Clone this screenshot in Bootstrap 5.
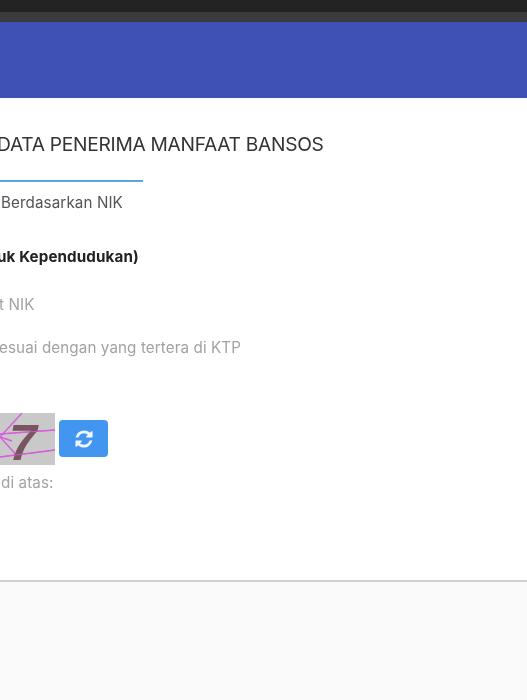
<!DOCTYPE html>
<html lang="id">
<head>
<meta charset="utf-8">
<title>Data Penerima Manfaat Bansos</title>
<link href="https://cdn.jsdelivr.net/npm/bootstrap@5.3.0/dist/css/bootstrap.min.css" rel="stylesheet">
<style>
html,body{height:100%;}
body{background:#fafafa;font-family:"Inter","Liberation Sans",sans-serif;overflow:hidden;}
.shot-wrap{filter:blur(.7px);height:700px;overflow:hidden;}
.top-dark{height:12px;background:#232323;}
.top-gray{height:10px;background:#3b3a3c;}
.head-blue{height:76px;background:#3f51b5;}
.sheet{height:484px;background:#fff;border-bottom:2px solid #cfcfcf;overflow:hidden;padding-top:35px;}
.ttl{font-size:19.2px;line-height:22px;color:#333;margin:0 0 0 -3px;font-weight:400;letter-spacing:-.28px;white-space:nowrap;}
.rule{width:143px;height:2px;background:#5aa5e0;margin-top:25px;}
.ln{font-size:15.2px;line-height:18px;white-space:nowrap;margin:0;letter-spacing:.1px;}
.l1{color:#555;margin:12px 0 0 1px;}
.l2{color:#222;font-weight:700;margin:36px 0 0 -3px;}
.l3{color:#a2a2a2;margin:30px 0 0 -1px;}
.l4{color:#a2a2a2;margin:25px 0 0 -1px;}
.cap-row{margin-top:56px;height:52px;}
.cap-img{width:55px;height:52px;background:#c9c9c9;display:block;}
.cap-btn{width:49px;height:37px;background:#4296f0;border:0;border-radius:4px;padding:0;margin:7px 0 0 4px;}
.cap-btn svg{width:20px;height:20px;fill:#eef5fd;}
.l5{color:#a2a2a2;margin:9px 0 0 1px;}
</style>
</head>
<body>
<div class="shot-wrap">
  <div class="top-dark"></div>
  <div class="top-gray"></div>
  <div class="head-blue"></div>
  <main class="sheet">
    <h1 class="ttl">DATA PENERIMA MANFAAT BANSOS</h1>
    <div class="rule"></div>
    <p class="ln l1">Berdasarkan NIK</p>
    <p class="ln l2">uk Kependudukan)</p>
    <p class="ln l3">t NIK</p>
    <p class="ln l4">esuai dengan yang tertera di KTP</p>
    <div class="d-flex align-items-start cap-row">
      <svg class="cap-img" viewBox="0 0 55 52" aria-label="captcha">
        <g stroke="#d65ddc" fill="none" stroke-width="1.4">
          <path d="M0 24 L22 0"/><path d="M0 24 L20 46"/><path d="M0 21 L55 17"/><path d="M0 44 L55 37"/><path d="M0 24 L12 28"/>
        </g>
        <text x="9" y="47" font-family="Liberation Sans, sans-serif" font-weight="700" font-style="italic" font-size="50" fill="#7a5560">7</text>
        <path d="M0 21 L55 17 M0 44 L55 37" stroke="#d65ddc" stroke-width="1.2" fill="none" opacity=".75"/>
      </svg>
      <button type="button" class="btn cap-btn d-flex align-items-center justify-content-center" aria-label="Muat ulang">
        <svg viewBox="0 0 1792 1792"><path d="M1639 1056q0 5-1 7-64 268-268 434.5t-478 166.5q-146 0-282.5-55t-243.5-157l-129 129q-19 19-45 19t-45-19-19-45v-448q0-26 19-45t45-19h448q26 0 45 19t19 45-19 45l-137 137q71 66 161 102t187 36q134 0 250-65t186-179q11-17 53-117 8-23 30-23h192q13 0 22.5 9.5t9.5 22.5zm25-800v448q0 26-19 45t-45 19h-448q-26 0-45-19t-19-45 19-45l138-138q-148-137-349-137-134 0-250 65t-186 179q-11 17-53 117-8 23-30 23h-199q-13 0-22.5-9.5t-9.5-22.5v-7q65-268 270-434.5t480-166.5q146 0 284 55.5t245 156.5l130-129q19-19 45-19t45 19 19 45z"/></svg>
      </button>
    </div>
    <p class="ln l5">di atas:</p>
  </main>
</div>
<script src="https://cdn.jsdelivr.net/npm/bootstrap@5.3.0/dist/js/bootstrap.bundle.min.js"></script>
</body>
</html>
